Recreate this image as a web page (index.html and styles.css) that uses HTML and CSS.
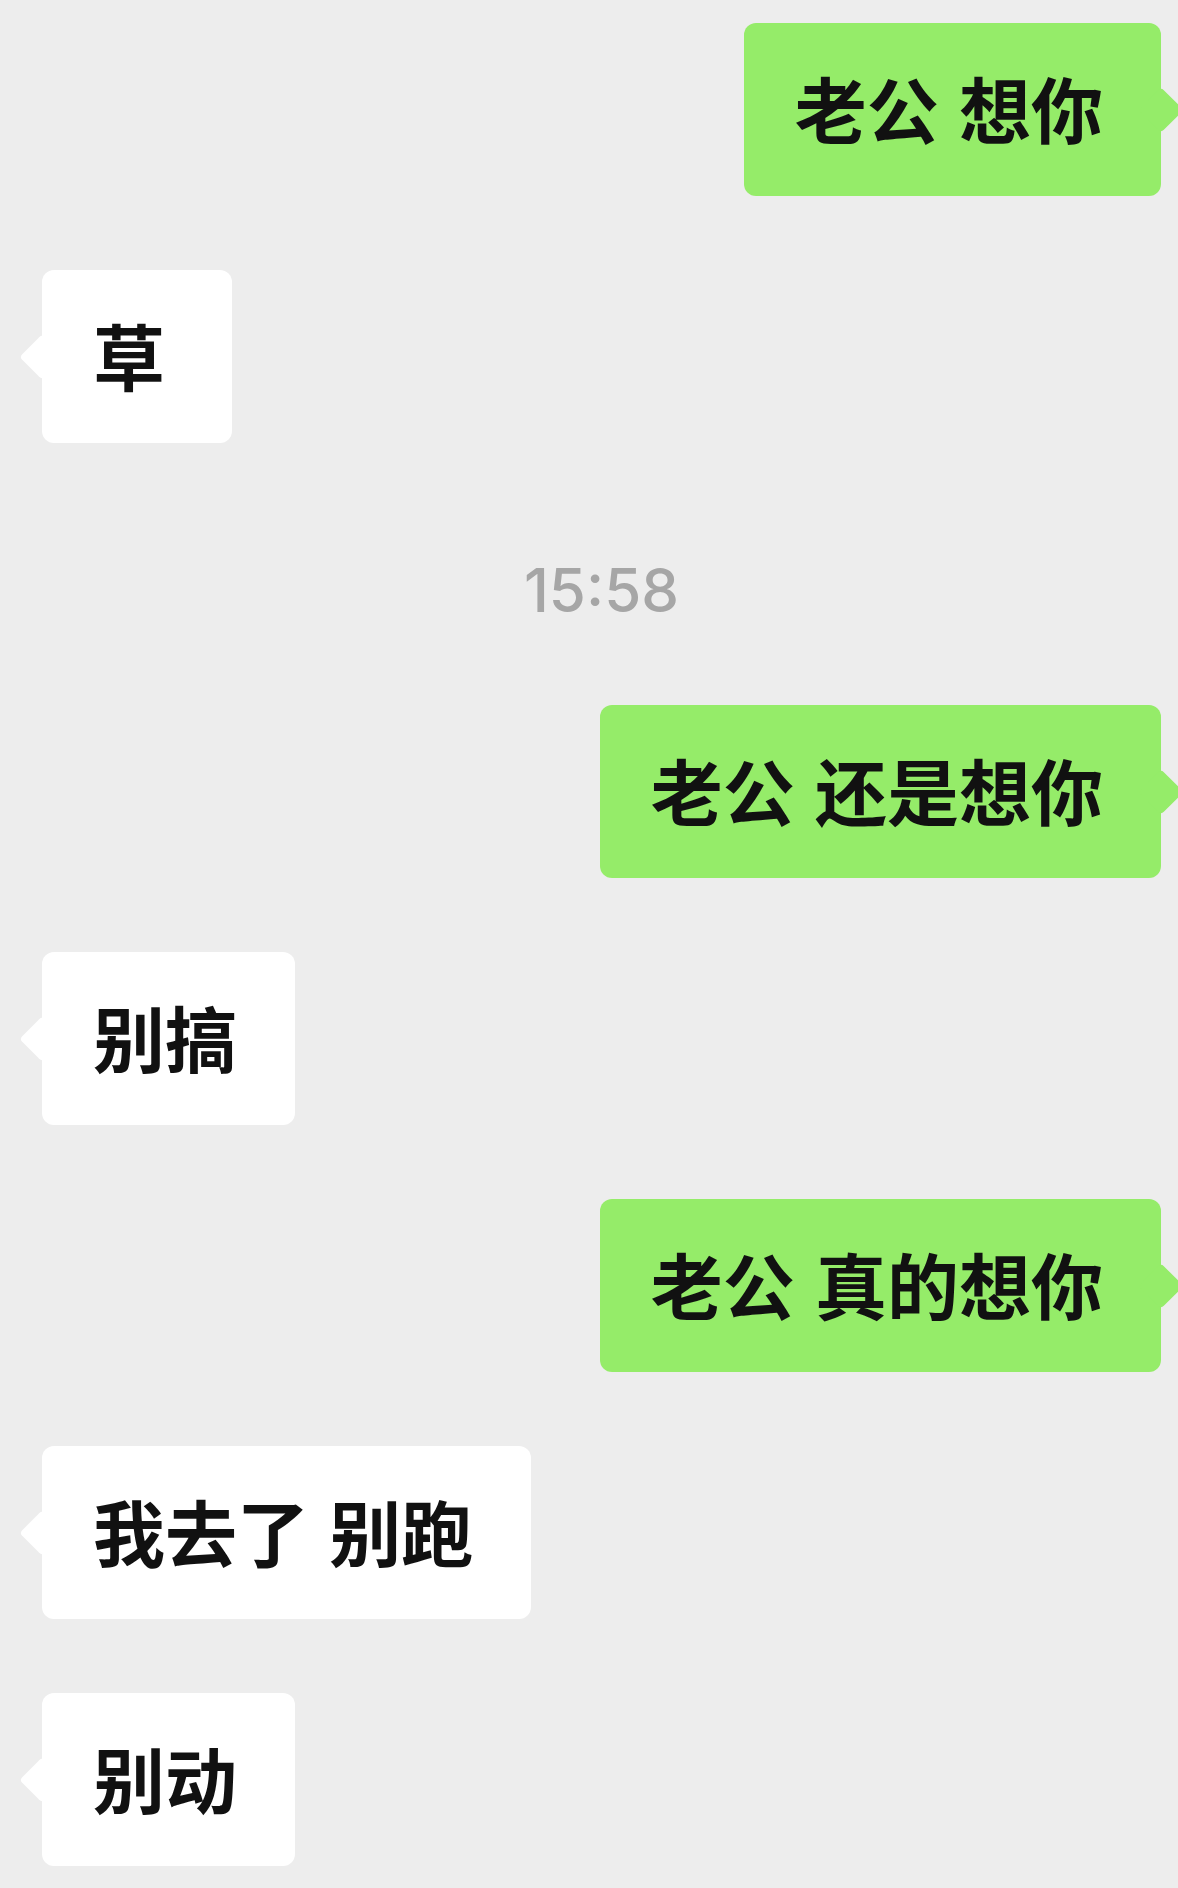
FILE: index.html
```html
<!DOCTYPE html>
<html>
  <head>
    <meta name="viewport" content="width=device-width,initial-scale=1.0" />
    <title>Chat</title>
    <link rel="stylesheet" href="styles.css">
  </head>
  <body>
    <div id="chat">
      <div class="bubble me">老公 想你</div>
      <div class="bubble them">草</div>
      <div class="time">15:58</div>
      <div class="bubble me">老公 还是想你</div>
      <div class="bubble them">别搞</div>
      <div class="bubble me">老公 真的想你</div>
      <div class="bubble them">我去了 别跑</div>
      <div class="bubble them">别动</div>
    </div>
  </body>
</html>
```
FILE: styles.css
```css
body {
  margin: 0;
  background: #ededed;
  font-family: "Noto Sans CJK SC", "Noto Sans", sans-serif;
  overflow: hidden;
}

#chat {
  display: flex;
  flex-direction: column;
  gap: 74px;
  padding: 23px 17px 0 42px;
  min-height: 1888px;
  box-sizing: border-box;
}

.bubble {
  position: relative;
  box-sizing: border-box;
  min-width: 190px;
  padding: 47px 58px 53px 51px;
  line-height: 73px;
  font-size: 72px;
  font-weight: 700;
  word-spacing: 4px;
  color: #111;
  border-radius: 12px;
  white-space: nowrap;
}
.bubble::after {
  content: "";
  position: absolute;
  top: 50%;
  width: 32px;
  height: 32px;
  margin-top: -16px;
  border-radius: 4px;
  transform: rotate(45deg);
  background: inherit;
}

.me {
  align-self: flex-end;
  background: #95ec69;
}
.me::after {
  right: -16px;
}

.them {
  align-self: flex-start;
  background: #fff;
}
.them::after {
  left: -16px;
}

.time {
  align-self: center;
  height: 114px;
  box-sizing: border-box;
  padding-top: 32px;
  line-height: 82px;
  font-family: Inter, "Liberation Sans", sans-serif;
  font-size: 60px;
  font-weight: 500;
  color: #a6a6a6;
}
```
